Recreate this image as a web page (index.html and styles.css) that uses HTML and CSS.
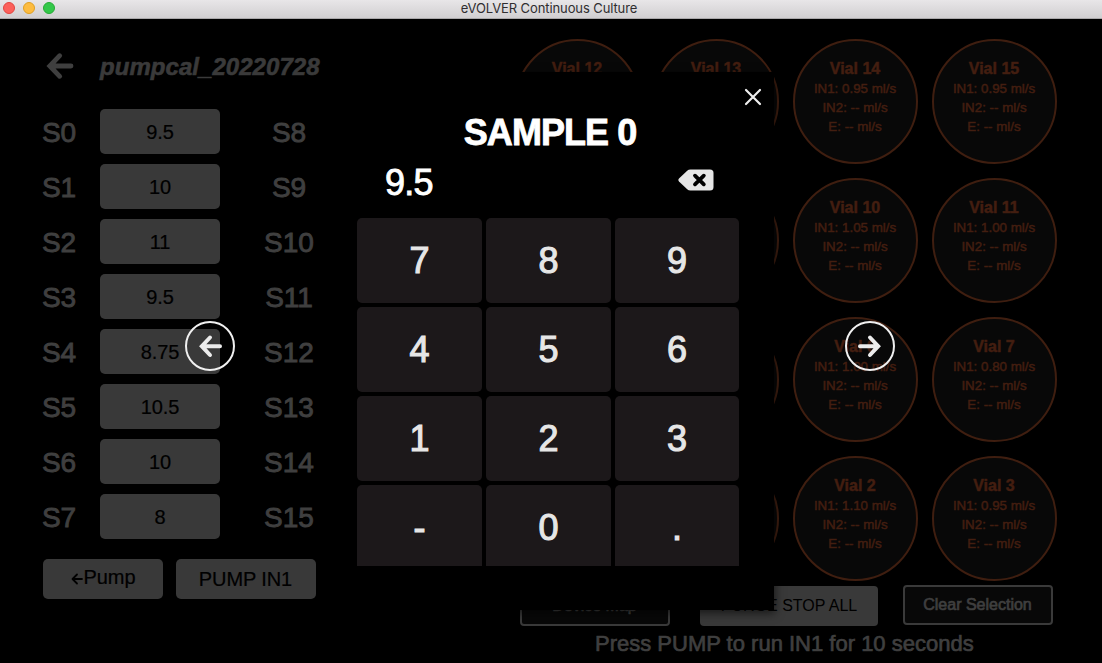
FILE: index.html
```
<!DOCTYPE html>
<html lang="en">
<head>
<meta charset="utf-8">
<title>eVOLVER Continuous Culture</title>
<link rel="stylesheet" href="styles.css">
</head>
<body>
<header class="titlebar">
  <div class="lights"><i class="light close-light"></i><i class="light min-light"></i><i class="light max-light"></i></div>
  <span class="titlebar-text">eVOLVER Continuous Culture</span>
</header>
<main class="app">
  <section class="calibration">
    <div class="cal-header">
      <svg class="back" viewBox="0 0 28 28"><path d="M13.700 3.700 3.800 14 13.700 24.300M4.500 14H25"/></svg>
      <h1 class="cal-name">pumpcal_20220728</h1>
    </div>
    <div class="samples">
      <span class="label">S0</span><div class="field">9.5</div><span class="label">S8</span>
      <span class="label">S1</span><div class="field">10</div><span class="label">S9</span>
      <span class="label">S2</span><div class="field">11</div><span class="label">S10</span>
      <span class="label">S3</span><div class="field">9.5</div><span class="label">S11</span>
      <span class="label">S4</span><div class="field">8.75</div><span class="label">S12</span>
      <span class="label">S5</span><div class="field">10.5</div><span class="label">S13</span>
      <span class="label">S6</span><div class="field">10</div><span class="label">S14</span>
      <span class="label">S7</span><div class="field">8</div><span class="label">S15</span>
    </div>
    <div class="cal-actions">
      <div class="btn btn-prev"><svg class="mini-arrow" viewBox="0 0 12 12"><path d="M6 1.500 1.500 6 6 10.500M1.800 6H11"/></svg>Pump</div>
      <div class="btn btn-pump">PUMP IN1</div>
    </div>
  </section>
  <section class="vials">
    <div class="vial-grid">
      <div class="vial"><b>Vial 12</b></div>
      <div class="vial"><b>Vial 13</b></div>
      <div class="vial"><b>Vial 14</b><span>IN1: 0.95 ml/s</span><span>IN2: -- ml/s</span><span>E: -- ml/s</span></div>
      <div class="vial"><b>Vial 15</b><span>IN1: 0.95 ml/s</span><span>IN2: -- ml/s</span><span>E: -- ml/s</span></div>
      <div class="vial"></div>
      <div class="vial"></div>
      <div class="vial"><b>Vial 10</b><span>IN1: 1.05 ml/s</span><span>IN2: -- ml/s</span><span>E: -- ml/s</span></div>
      <div class="vial"><b>Vial 11</b><span>IN1: 1.00 ml/s</span><span>IN2: -- ml/s</span><span>E: -- ml/s</span></div>
      <div class="vial"></div>
      <div class="vial"></div>
      <div class="vial"><b>Vial 6</b><span>IN1: 1.00 ml/s</span><span>IN2: -- ml/s</span><span>E: -- ml/s</span></div>
      <div class="vial"><b>Vial 7</b><span>IN1: 0.80 ml/s</span><span>IN2: -- ml/s</span><span>E: -- ml/s</span></div>
      <div class="vial"></div>
      <div class="vial"></div>
      <div class="vial"><b>Vial 2</b><span>IN1: 1.10 ml/s</span><span>IN2: -- ml/s</span><span>E: -- ml/s</span></div>
      <div class="vial"><b>Vial 3</b><span>IN1: 0.95 ml/s</span><span>IN2: -- ml/s</span><span>E: -- ml/s</span></div>
    </div>
    <div class="vial-actions">
      <div class="outline-btn map-btn">Device Map</div>
      <div class="stop-btn">PURGE STOP ALL</div>
      <div class="outline-btn clear-btn">Clear Selection</div>
    </div>
    <p class="hint">Press PUMP to run IN1 for 10 seconds</p>
  </section>
</main>
<div class="modal">
  <div class="modal-top"><svg class="close" viewBox="0 0 18 18"><path d="M2 2 16 16M16 2 2 16"/></svg></div>
  <h2 class="modal-title">SAMPLE 0</h2>
  <div class="entry">
    <span class="entry-value">9.5</span>
    <svg class="erase" viewBox="0 0 36 22"><path class="erase-body" d="M1 9.600 9.200 1.700Q10.500.5 12.500.5H32Q35.500.5 35.500 4V18Q35.500 21.500 32 21.500H12.500Q10.500 21.500 9.200 20.300L1 12.400Q-.3 11 1 9.600Z"/><path class="erase-x" d="M17 6.700 25.800 15.300M25.800 6.700 17 15.300"/></svg>
  </div>
  <div class="keypad">
    <div class="key">7</div><div class="key">8</div><div class="key">9</div>
    <div class="key">4</div><div class="key">5</div><div class="key">6</div>
    <div class="key">1</div><div class="key">2</div><div class="key">3</div>
    <div class="key">-</div><div class="key">0</div><div class="key">.</div>
  </div>
</div>
<div class="nav nav-left"><svg viewBox="0 0 24 24"><path d="M12 3.500 3.800 12.200 12 21M4.300 12.200H22"/></svg></div>
<div class="nav nav-right"><svg viewBox="0 0 24 24"><path d="M12 3.500 20.200 12.200 12 21M19.700 12.200H2"/></svg></div>
</body>
</html>
```
FILE: styles.css
```
* { box-sizing: border-box; }
body {
  margin: 0;
  width: 1102px;
  height: 663px;
  overflow: hidden;
  position: relative;
  background: #000;
  font-family: "Liberation Sans", Arial, sans-serif;
}
svg { display: block; fill: none; stroke-linecap: round; stroke-linejoin: round; }

.titlebar {
  height: 19px;
  display: grid;
  grid-template-columns: 100px 1fr 100px;
  background: linear-gradient(#e8e6e8, #d1cfd1);
  border-bottom: 1px solid #aaa8aa;
}
.lights { display: flex; gap: 8px; padding: 2px 0 0 3px; }
.light { width: 12px; height: 12px; border-radius: 50%; border: 1px solid; }
.close-light { background: #fc605b; border-color: #e14640; }
.min-light { background: #fdbc40; border-color: #dfa023; }
.max-light { background: #34c84a; border-color: #27aa35; }
.titlebar-text {
  font: 13px/17px Inter, Roboto, sans-serif;
  letter-spacing: -0.1px;
  color: #302e30;
  text-align: center;
  padding-right: 4px;
}

.app { display: flex; height: 644px; }
.calibration { width: 515px; padding: 20px 0 0 18px; }
.cal-header { display: flex; align-items: center; height: 54px; padding-left: 28px; }
.back { width: 28px; height: 28px; stroke: #3f3f3f; stroke-width: 4.800; stroke-linejoin: miter; }
.cal-name {
  margin: 1px 0 0 26px;
  font-size: 24px;
  line-height: 30px;
  font-style: italic;
  letter-spacing: .05px;
  color: #3a3a3a;
  -webkit-text-stroke: .6px #3a3a3a;
}
.samples {
  display: grid;
  grid-template-columns: 82px 120px 138px;
  grid-auto-rows: 45px;
  row-gap: 10px;
  padding-top: 16px;
}
.label {
  text-align: center;
  font-size: 28px;
  line-height: 48px;
  color: #3f3f3f;
  -webkit-text-stroke: .9px #3f3f3f;
}
.field {
  border-radius: 5px;
  background: #393939;
  color: #000;
  font-size: 20px;
  letter-spacing: -.15px;
  line-height: 46px;
  text-align: center;
  -webkit-text-stroke: .2px #000;
}
.cal-actions { display: flex; gap: 13px; padding: 20px 0 0 25px; }
.btn {
  height: 40px;
  border-radius: 5px;
  background: #393939;
  color: #000;
  font-size: 20px;
  letter-spacing: -.1px;
  line-height: 40px;
  text-align: center;
  -webkit-text-stroke: .2px #000;
}
.btn-prev { width: 120px; line-height: 37px; display: flex; justify-content: center; align-items: flex-start; }
.btn-pump { width: 140px; padding-right: 1px; }
.mini-arrow { width: 12px; height: 12px; margin: 14px 1px 0 0; stroke: #000; stroke-width: 1.800; }

.vials { width: 587px; padding-top: 20px; }
.vial-grid { display: grid; grid-template-columns: repeat(4, 125px); grid-auto-rows: 125px; gap: 14px; }
.vial {
  display: flex;
  flex-direction: column;
  align-items: center;
  padding: 17px 1px 0 0;
  border: 2px solid #3f1e10;
  border-radius: 50%;
  background: #080808;
  color: #431e10;
  font-size: 13.330px;
  line-height: 19px;
  white-space: nowrap;
}
.vial b { font-size: 16px; line-height: 21px; -webkit-text-stroke: .5px #431e10; }
.vial span { -webkit-text-stroke: .5px #431e10; }
.vial-actions { display: flex; padding: 4px 0 0 5px; }
.outline-btn {
  width: 150px;
  height: 40px;
  border: 2px solid #3a3a3a;
  border-radius: 4px;
  background: #080808;
  color: #3f3f3f;
  font-size: 16px;
  line-height: 36px;
  padding-right: 1px;
  text-align: center;
  -webkit-text-stroke: .7px #3f3f3f;
}
.map-btn { margin-top: 1px; }
.stop-btn {
  width: 178px;
  height: 40px;
  margin: 1px 25px 0 30px;
  border-radius: 4px;
  background: #393939;
  color: #000;
  font-size: 16px;
  line-height: 40px;
  text-align: center;
}
.hint {
  margin: 4px 0 0 80px;
  font-size: 22px;
  line-height: 28px;
  color: #3f3f3f;
  -webkit-text-stroke: .7px #3f3f3f;
}

.modal {
  position: absolute;
  left: 328px;
  top: 72px;
  width: 446px;
  height: 538px;
  padding: 16px 12px 0 29px;
  background: #000;
  box-shadow: 1px 3px 9px rgba(0, 0, 0, .6);
}
.modal-top { display: flex; justify-content: flex-end; height: 24px; }
.close { width: 18px; height: 18px; stroke: #eee; stroke-width: 2.200; }
.modal-title {
  margin: 0;
  width: 386px;
  font-size: 36px;
  line-height: 41px;
  letter-spacing: -.950px;
  text-align: center;
  color: #fff;
  -webkit-text-stroke: .8px #fff;
}
.entry { display: flex; justify-content: space-between; align-items: center; width: 356.5px; height: 60px; padding-left: 28px; }
.entry-value { font-size: 36px; line-height: 60px; letter-spacing: -.8px; color: #fff; -webkit-text-stroke: .9px #fff; }
.erase { width: 36px; height: 22px; margin-bottom: 7px; }
.erase-body { fill: #e6e6e6; }
.erase-x { stroke: #000; stroke-width: 3.800; }
.keypad {
  display: grid;
  grid-template-columns: 125px 125px 124px;
  grid-auto-rows: 85px;
  gap: 4px;
  height: 348px;
  margin-top: 5px;
  overflow: hidden;
}
.key {
  border-radius: 5px;
  background: #1c181a;
  color: #e6e6e6;
  font-size: 36px;
  line-height: 86px;
  text-align: center;
  -webkit-text-stroke: 1.100px #e6e6e6;
}

.nav {
  position: absolute;
  top: 321px;
  width: 50px;
  height: 50px;
  display: flex;
  align-items: center;
  justify-content: center;
  border: 2px solid #f0f0f0;
  border-radius: 50%;
}
.nav svg { width: 24px; height: 24px; stroke: #ececec; stroke-width: 4; stroke-linejoin: miter; }
.nav-left { left: 185px; }
.nav-right { left: 845px; }
```
